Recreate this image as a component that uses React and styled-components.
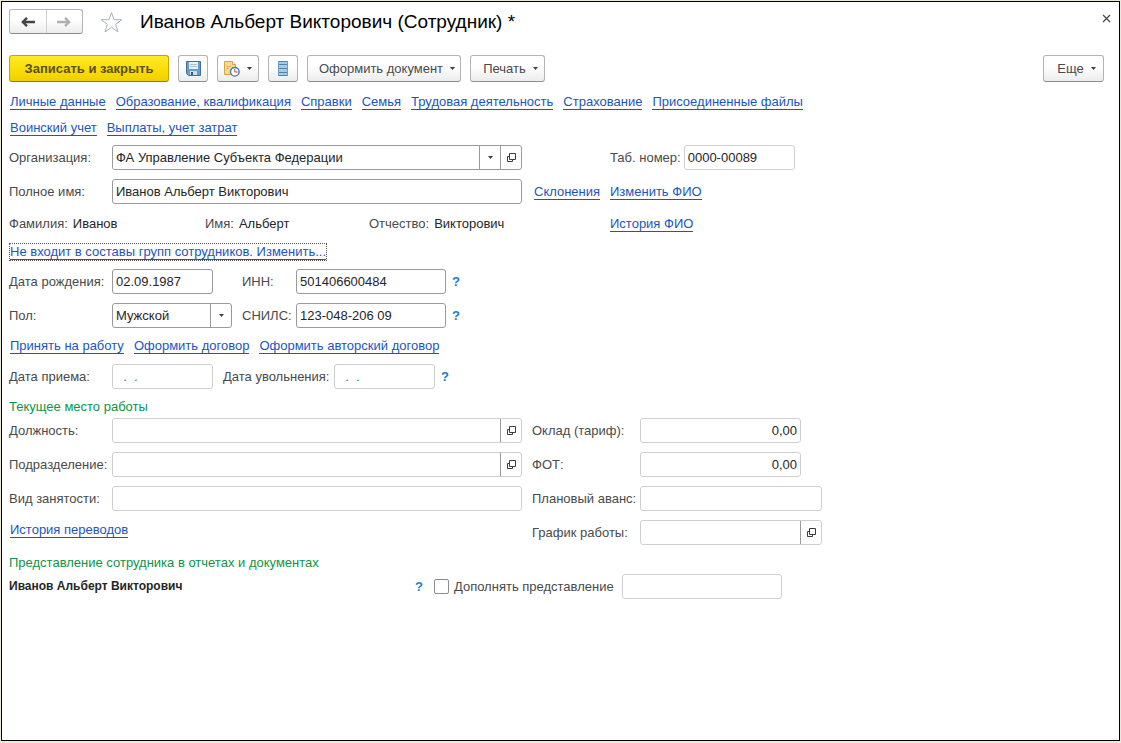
import React from 'react'
import styled, { createGlobalStyle } from 'styled-components'


const GlobalStyle = createGlobalStyle`
    * {
        box-sizing: border-box;
    }
    body {
        margin: 0;
        background: #ece9d8;
        font-family: "Liberation Sans", Arial, sans-serif;
        font-size: 13px;
        line-height: 15px;
        color: #4a4a4a;
    }
    button, input, select {
        font: inherit;
        color: inherit;
    }
`

const Page = styled.div`
    display: flex;
    min-height: 100vh;
    padding: 1px 1px 2px;
`

const Window = styled.main`
    flex: 1;
    min-width: 0;
    background: #fff;
    border: 1px solid #000;
`

const Header = styled.header`
    display: flex;
    align-items: center;
    gap: 17px;
    padding: 7px 8px 0 7px;
`

const NavGroup = styled.div`
    display: flex;
    width: 74px;
    height: 25px;
    border: 1px solid #b4b4b4;
    border-bottom-color: #8e8e8e;
    border-radius: 3px;
    background: linear-gradient(#fff 40%, #ececec);
`

const NavButton = styled.button`
    flex: 1;
    display: flex;
    align-items: center;
    justify-content: center;
    padding: 0;
    border: 0;
    background: none;
    color: ${({ $muted }) => ($muted ? '#b0b0b0' : '#444')};

    & + & {
        border-left: 1px solid #cfcfcf;
    }
`

const IconButton = styled.button`
    display: flex;
    padding: 0;
    border: 0;
    background: none;
`

const CloseButton = styled(IconButton)`
    margin-left: auto;
    align-self: flex-start;
    padding-top: 5px;
`

const Title = styled.h1`
    margin: 0;
    font-size: 19px;
    line-height: 24px;
    font-weight: 400;
    color: #000;
`

const Toolbar = styled.div`
    display: flex;
    gap: 9px;
    padding: 21px 15px 11px 7px;
`

const ToolButton = styled.button`
    display: flex;
    align-items: center;
    justify-content: center;
    gap: 7px;
    width: ${({ $width }) => $width}px;
    height: 27px;
    padding: 0;
    border: 1px solid #b4b4b4;
    border-bottom-color: #8e8e8e;
    border-radius: 3px;
    background: linear-gradient(#fff 40%, #ececec);
    white-space: nowrap;
`

const MenuButton = styled(ToolButton)`
    padding-left: 6px;
`

const PrimaryButton = styled(ToolButton)`
    border-color: #c2a500;
    border-bottom-color: #927c00;
    background: linear-gradient(#ffea2b, #fbdc00 60%, #efcf00);
    font-weight: 700;
    color: #57501f;
`

const MoreButton = styled(MenuButton)`
    margin-left: auto;
`

const Form = styled.form`
    display: flex;
    flex-direction: column;
    gap: 9px;
    padding: 0 15px 20px 7px;
`

const LinkRow = styled.nav`
    display: flex;
    flex-wrap: wrap;
    align-items: center;
    gap: 10px;
    min-height: 17px;
    padding-left: 1px;
`

const Link = styled.a`
    color: #1c55c0;
    text-decoration: none;
    border-bottom: 1px solid #1c55c0;
    white-space: nowrap;
`

const FocusedLink = styled(Link)`
    outline: 1px dotted #555;
`

const PersonGrid = styled.div`
    display: grid;
    grid-template-columns: 91px minmax(0, 410px) 64px 1fr;
    column-gap: 12px;
    row-gap: 9px;
    align-items: center;
`

const NumberCell = styled.div`
    grid-column: 4;
    display: flex;
    align-items: center;
    gap: 3px;
`

const Names = styled.div`
    grid-column: 1 / 4;
    display: grid;
    grid-template-columns: 196px 164px 1fr;
    align-items: center;
    min-height: 21px;
`

const Value = styled.span`
    margin-left: 5px;
    color: #262626;
`

const DetailsGrid = styled.div`
    display: grid;
    grid-template-columns: 93px 120px 44px auto;
    justify-content: start;
    gap: 9px 10px;
    align-items: center;
`

const DatesGrid = styled.div`
    display: grid;
    grid-template-columns: 93px 101px 101px auto;
    justify-content: start;
    column-gap: 10px;
    align-items: center;
    padding-top: 1px;
`

const Inline = styled.div`
    display: flex;
    align-items: center;
    gap: 6px;
`

const Label = styled.label`
    white-space: nowrap;
`

const Input = styled.input`
    width: ${({ $width }) => ($width ? `${$width}px` : '100%')};
    min-width: 0;
    height: 25px;
    padding: 0 3px;
    border: 1px solid ${({ $pale }) => ($pale ? '#cfcfcf' : '#9a9a9a')};
    border-radius: 3px;
    background: #fff;
    color: #262626;
    text-align: ${({ $right }) => ($right ? 'right' : 'left')};
    outline: 0;
`

const DateInput = styled(Input)`
    color: #1673b5;
`

const Combo = styled.div`
    display: flex;
    height: 25px;
    border: 1px solid ${({ $pale }) => ($pale ? '#cfcfcf' : '#9a9a9a')};
    border-radius: 3px;
    background: #fff;

    ${Input} {
        flex: 1;
        height: 23px;
        border: 0;
    }
`

const ComboButton = styled.button`
    display: flex;
    align-items: center;
    justify-content: center;
    width: 21px;
    padding: 0;
    border: 0;
    border-left: 1px solid #9a9a9a;
    background: none;
`

const SelectBox = styled.div`
    display: grid;
    grid-template-columns: 1fr 21px;
    height: 25px;
    border: 1px solid #9a9a9a;
    border-radius: 3px;
`

const Select = styled.select`
    grid-area: 1 / 1 / 2 / 3;
    appearance: none;
    padding: 0 3px;
    border: 0;
    background: none;
    color: #262626;
    outline: 0;
`

const SelectArrow = styled.span`
    grid-area: 1 / 2;
    display: flex;
    align-items: center;
    justify-content: center;
    border-left: 1px solid #9a9a9a;
    pointer-events: none;
`

const HelpButton = styled.button`
    padding: 0;
    border: 0;
    background: none;
    font-weight: 700;
    color: #1480c8;
`

const Section = styled.section`
    display: flex;
    flex-direction: column;
    gap: 3px;
`

const SectionTitle = styled.h2`
    margin: 0;
    font-size: 13px;
    line-height: 17px;
    font-weight: 400;
    color: #0e9447;
`

const Columns = styled.div`
    display: flex;
    align-items: flex-start;
    gap: 10px;
`

const JobGrid = styled.div`
    flex: 0 1 513px;
    display: grid;
    grid-template-columns: 93px minmax(0, 1fr);
    gap: 9px 10px;
    align-items: center;
`

const PayGrid = styled.div`
    display: grid;
    grid-template-columns: 98px 182px;
    gap: 9px 10px;
    align-items: center;
`

const HistoryRow = styled(LinkRow)`
    grid-column: 1 / 3;
    min-height: 20px;
`

const PrintRow = styled.div`
    display: flex;
    align-items: center;
`

const PrintName = styled.strong`
    flex: 0 1 406px;
    font-size: 12px;
    color: #262626;
`

const Checkbox = styled.input`
    appearance: none;
    width: 15px;
    height: 15px;
    margin: 0 5px 0 11px;
    border: 1px solid #8c8c8c;
    border-radius: 2px;
    background: #fff;
`

const ExtraLabel = styled(Label)`
    margin-right: 8px;
`


const Caret = () => (
  <svg width="5" height="3" viewBox="0 0 5 3">
    <path d="M0 0h5L2.5 3z" fill="#3f3f3f" />
  </svg>
)

const OpenIcon = () => (
  <svg width="9" height="9" viewBox="0 0 9 9" fill="none" stroke="#3c3c3c">
    <path d="M2.5 .5h6v6h-6z" />
    <path d="M2 3.500H.5v5h5V7" />
  </svg>
)

const Arrow = ({ back }) => (
  <svg width="14" height="10" viewBox="0 0 14 10" fill="none" stroke="currentColor" strokeWidth="2.400">
    <path d={back ? 'M14 5H2M6 .8L1.800 5 6 9.200' : 'M0 5h12M8 .8L12.200 5 8 9.200'} />
  </svg>
)

const StarIcon = () => (
  <svg width="23" height="22" viewBox="0 0 23 22" fill="#fff" stroke="#a9b0b8">
    <path d="M11.500 1.500l2.600 7.200h7.700l-6.200 4.600 2.300 7.500-6.400-4.500-6.400 4.500 2.300-7.500L1.200 8.700h7.700z" />
  </svg>
)

const CloseIcon = () => (
  <svg width="9" height="9" viewBox="0 0 9 9" stroke="#4a4a4a" strokeWidth="1.300">
    <path d="M1 1l7 7M8 1L1 8" />
  </svg>
)

const SaveIcon = () => (
  <svg width="15" height="15" viewBox="0 0 15 15">
    <path d="M.5 .5h14v14h-12l-2-2z" fill="#6a9cc8" stroke="#416f9b" />
    <path d="M3 1h9v7H3z" fill="#e9f1f7" />
    <path d="M4 3.500h7M4 5.500h7" stroke="#a9c3da" />
    <path d="M4 10h7v4H4z" fill="#d5dde4" />
    <path d="M5 11h2v3H5z" fill="#33597d" />
  </svg>
)

const HistoryIcon = () => (
  <svg width="16" height="16" viewBox="0 0 16 16">
    <path d="M.5 .5h8l3 3v10H.5z" fill="#f5da8c" stroke="#d0a848" />
    <path d="M8.500 .5v3h3" fill="#fff3cc" stroke="#d0a848" />
    <path d="M2 5.500h5M2 7.500h3" stroke="#d9b763" />
    <circle cx="10.800" cy="10.800" r="4.300" fill="#fff" stroke="#4577b8" strokeWidth="1.400" />
    <path d="M10.800 8v3h2.700" stroke="#d33" fill="none" />
  </svg>
)

const ListIcon = () => (
  <svg width="10" height="15" viewBox="0 0 10 15">
    <path d="M0 0h10v15H0z" fill="#a6cbe4" />
    <path d="M0 .5h10M0 3.500h10M0 7.500h10M0 11.500h10M0 14.500h10" stroke="#4f84ad" />
    <path d="M.5 0v15M9.500 0v15" stroke="#6d9dc0" />
  </svg>
)

const Help = () => <HelpButton type="button" aria-label="Справка">?</HelpButton>

const OpenField = ({ id, value = '', pale, list }) => (
  <Combo $pale={pale}>
    <Input id={id} defaultValue={value} />
    {list && <ComboButton type="button" aria-label="Выбрать"><Caret /></ComboButton>}
    <ComboButton type="button" aria-label="Открыть"><OpenIcon /></ComboButton>
  </Combo>
)

const mainLinks = [
  'Личные данные',
  'Образование, квалификация',
  'Справки',
  'Семья',
  'Трудовая деятельность',
  'Страхование',
  'Присоединенные файлы',
]
const extraLinks = ['Воинский учет', 'Выплаты, учет затрат']
const hireLinks = ['Принять на работу', 'Оформить договор', 'Оформить авторский договор']

const Links = ({ items }) => (
  <LinkRow>
    {items.map((item) => <Link href="#" key={item}>{item}</Link>)}
  </LinkRow>
)


const App = () => {
  return (
    <Page>
      <GlobalStyle />
      <Window>
        <Header>
          <NavGroup>
            <NavButton type="button" aria-label="Назад"><Arrow back /></NavButton>
            <NavButton type="button" aria-label="Вперед" $muted><Arrow /></NavButton>
          </NavGroup>
          <IconButton type="button" aria-label="В избранное"><StarIcon /></IconButton>
          <Title>Иванов Альберт Викторович (Сотрудник) *</Title>
          <CloseButton type="button" aria-label="Закрыть"><CloseIcon /></CloseButton>
        </Header>

        <Toolbar>
          <PrimaryButton type="button" $width={160}>Записать и закрыть</PrimaryButton>
          <ToolButton type="button" $width={30} aria-label="Записать"><SaveIcon /></ToolButton>
          <ToolButton type="button" $width={42} aria-label="История"><HistoryIcon /><Caret /></ToolButton>
          <ToolButton type="button" $width={30} aria-label="Список"><ListIcon /></ToolButton>
          <MenuButton type="button" $width={154}>Оформить документ<Caret /></MenuButton>
          <MenuButton type="button" $width={75}>Печать<Caret /></MenuButton>
          <MoreButton type="button" $width={61}>Еще<Caret /></MoreButton>
        </Toolbar>

        <Form>
          <Links items={mainLinks} />
          <Links items={extraLinks} />

          <PersonGrid>
            <Label htmlFor="org">Организация:</Label>
            <OpenField id="org" value="ФА Управление Субъекта Федерации" list />
            <NumberCell>
              <Label htmlFor="number">Таб. номер:</Label>
              <Input id="number" $width={111} $pale defaultValue="0000-00089" />
            </NumberCell>

            <Label htmlFor="fullname">Полное имя:</Label>
            <Input id="fullname" defaultValue="Иванов Альберт Викторович" />
            <div><Link href="#">Склонения</Link></div>
            <div><Link href="#">Изменить ФИО</Link></div>

            <Names>
              <span>Фамилия:<Value>Иванов</Value></span>
              <span>Имя:<Value>Альберт</Value></span>
              <span>Отчество:<Value>Викторович</Value></span>
            </Names>
            <div><Link href="#">История ФИО</Link></div>
          </PersonGrid>

          <LinkRow>
            <FocusedLink href="#">Не входит в составы групп сотрудников. Изменить...</FocusedLink>
          </LinkRow>

          <DetailsGrid>
            <Label htmlFor="birth">Дата рождения:</Label>
            <Input id="birth" $width={101} defaultValue="02.09.1987" />
            <Label htmlFor="inn">ИНН:</Label>
            <Inline>
              <Input id="inn" $width={150} defaultValue="501406600484" />
              <Help />
            </Inline>

            <Label htmlFor="sex">Пол:</Label>
            <SelectBox>
              <Select id="sex" defaultValue="m">
                <option value="m">Мужской</option>
                <option value="f">Женский</option>
              </Select>
              <SelectArrow><Caret /></SelectArrow>
            </SelectBox>
            <Label htmlFor="snils">СНИЛС:</Label>
            <Inline>
              <Input id="snils" $width={150} defaultValue="123-048-206 09" />
              <Help />
            </Inline>
          </DetailsGrid>

          <Links items={hireLinks} />

          <DatesGrid>
            <Label htmlFor="hired">Дата приема:</Label>
            <DateInput id="hired" $pale defaultValue="  .  ." />
            <Label htmlFor="fired">Дата увольнения:</Label>
            <Inline>
              <DateInput id="fired" $width={101} $pale defaultValue="  .  ." />
              <Help />
            </Inline>
          </DatesGrid>

          <Section>
            <SectionTitle>Текущее место работы</SectionTitle>
            <Columns>
              <JobGrid>
                <Label htmlFor="position">Должность:</Label>
                <OpenField id="position" pale />
                <Label htmlFor="department">Подразделение:</Label>
                <OpenField id="department" pale />
                <Label htmlFor="kind">Вид занятости:</Label>
                <Input id="kind" $pale />
                <HistoryRow><Link href="#">История переводов</Link></HistoryRow>
              </JobGrid>
              <PayGrid>
                <Label htmlFor="salary">Оклад (тариф):</Label>
                <Input id="salary" $width={161} $pale $right defaultValue="0,00" />
                <Label htmlFor="fund">ФОТ:</Label>
                <Input id="fund" $width={161} $pale $right defaultValue="0,00" />
                <Label htmlFor="advance">Плановый аванс:</Label>
                <Input id="advance" $pale />
                <Label htmlFor="schedule">График работы:</Label>
                <OpenField id="schedule" pale />
              </PayGrid>
            </Columns>
          </Section>

          <Section>
            <SectionTitle>Представление сотрудника в отчетах и документах</SectionTitle>
            <PrintRow>
              <PrintName>Иванов Альберт Викторович</PrintName>
              <Help />
              <Checkbox type="checkbox" id="extra" />
              <ExtraLabel htmlFor="extra">Дополнять представление</ExtraLabel>
              <Input $width={160} $pale aria-label="Представление" />
            </PrintRow>
          </Section>
        </Form>
      </Window>
    </Page>
  )
}

export default App
